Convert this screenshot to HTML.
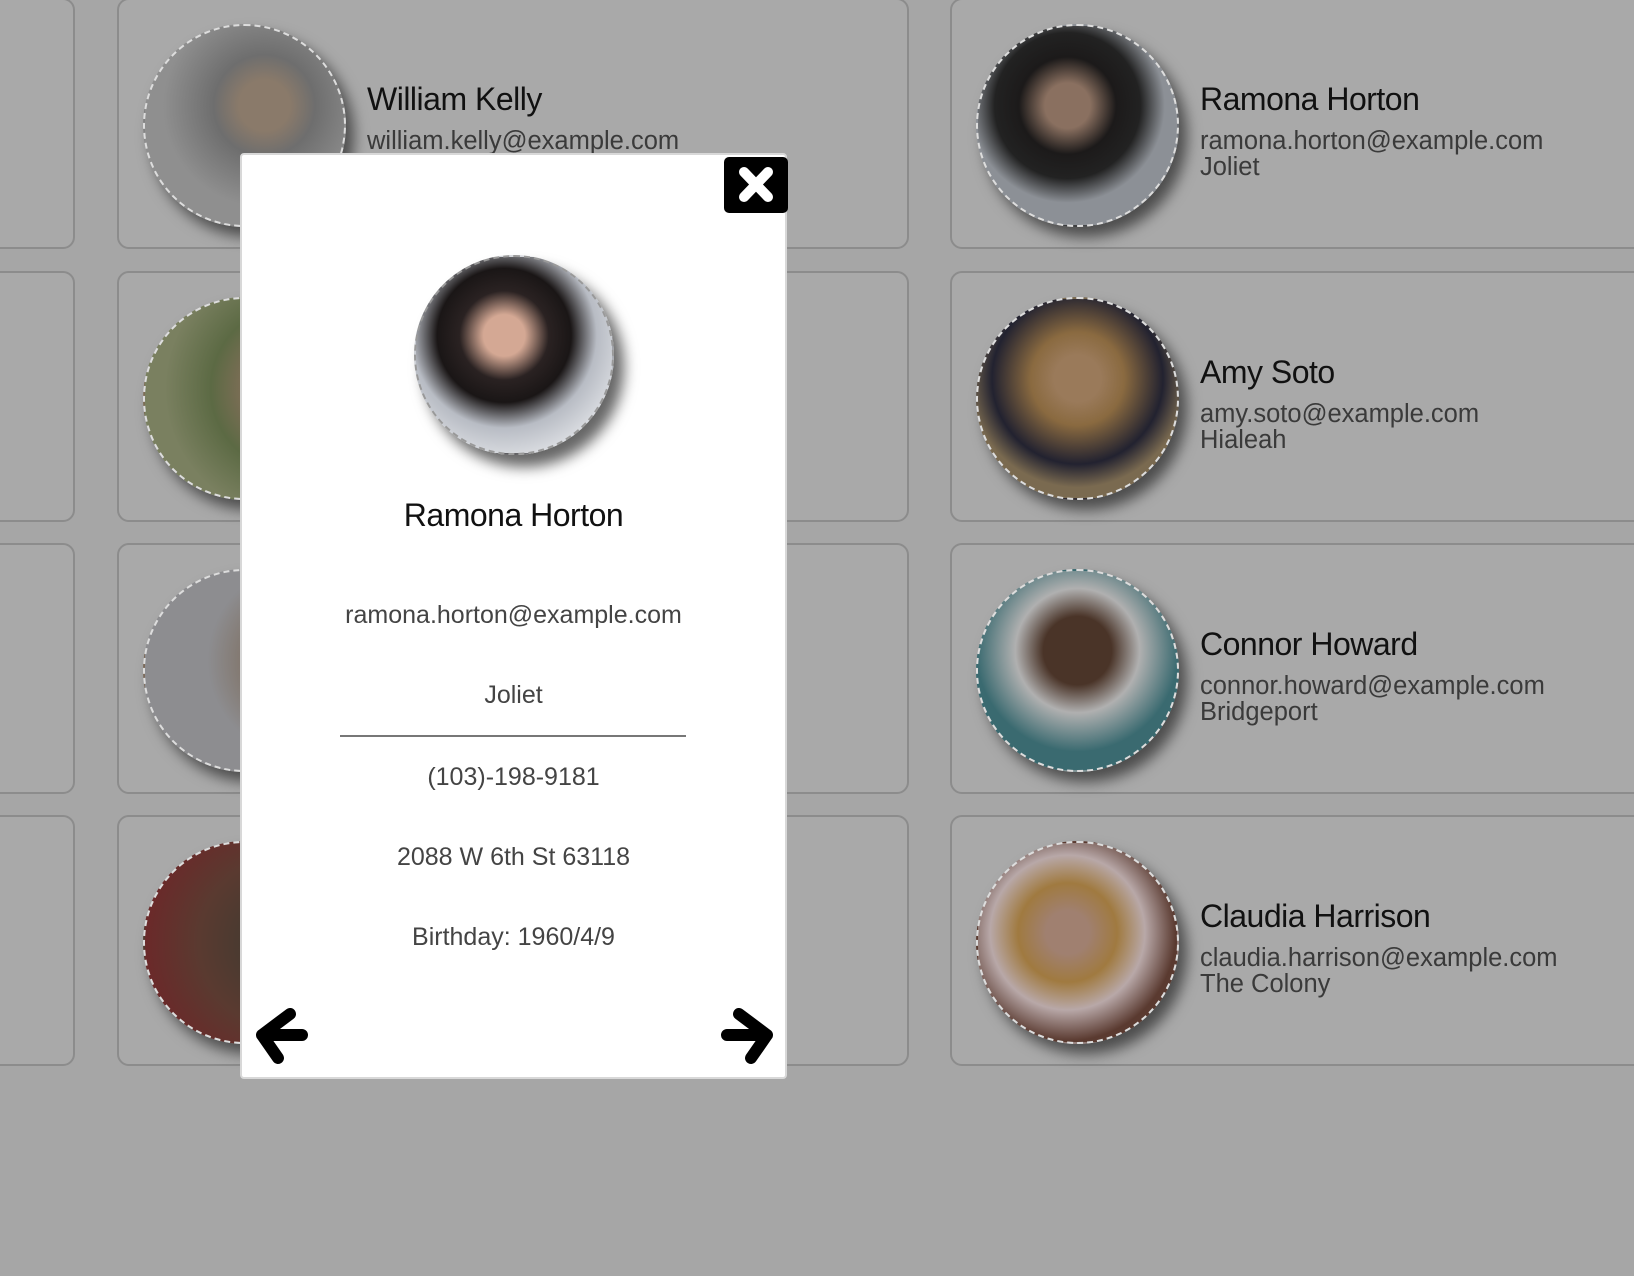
<!DOCTYPE html>
<html><head><meta charset="utf-8"><style>
*{margin:0;padding:0;box-sizing:border-box}
body{width:1634px;height:1276px;overflow:hidden;background:#a6a6a6;font-family:"Liberation Sans",sans-serif;position:relative}
.card{position:absolute;width:792px;height:251px;border:2px solid #8c8c8c;border-radius:12px;background:#a9a9a9}
.av{position:absolute;left:24px;top:24px;width:203px;height:203px;border-radius:50%;border:2px dashed #ddd;box-shadow:8px 10px 14px rgba(0,0,0,.55);overflow:hidden}
.card .nm{position:absolute;left:248px;top:81px;font-size:32px;color:#111;letter-spacing:-0.5px}
.card .em{position:absolute;left:248px;top:128px;font-size:25.5px;color:#3a3a3a;line-height:26px}
.modal{position:absolute;left:240px;top:153px;width:547px;height:926px;background:#fff;border:2px solid #d8d8d8;border-radius:4px}
.mt{position:absolute;left:0;width:100%;text-align:center;font-size:25px;color:#444}
</style></head><body>

<div class="card" style="left:-717px;top:-2px"></div>
<div class="card" style="left:-717px;top:271px"></div>
<div class="card" style="left:-717px;top:543px"></div>
<div class="card" style="left:-717px;top:815px"></div>

<div class="card" style="left:117px;top:-2px"><div class="av" style="background:radial-gradient(circle at 60% 40%,#8a7a6a 0 15%,#6e6e6e 30%,#8f8f8f 60%)"></div><div class="nm">William Kelly</div><div class="em">william.kelly@example.com</div></div>
<div class="card" style="left:117px;top:271px"><div class="av" style="background:radial-gradient(circle at 75% 45%,#8a6f5d 0 20%,#5c6a44 45%,#7a8060 70%)"></div></div>
<div class="card" style="left:117px;top:543px"><div class="av" style="background:radial-gradient(circle at 80% 45%,#7b6a5a 0 20%,#8d8d90 50%)"></div></div>
<div class="card" style="left:117px;top:815px"><div class="av" style="background:radial-gradient(circle at 70% 50%,#4a3a30 0 25%,#5a3a30 50%,#6a2a2a 80%)"></div></div>

<div class="card" style="left:950px;top:-2px"><div class="av" style="background:radial-gradient(circle at 45% 40%,#8a7060 0 14%,#1c1a1a 30%,#222 45%,#8c9096 60%)"></div><div class="nm">Ramona Horton</div><div class="em">ramona.horton@example.com<br>Joliet</div></div>
<div class="card" style="left:950px;top:271px"><div class="av" style="background:radial-gradient(circle at 50% 40%,#9a7a5a 0 15%,#8a6a40 30%,#222230 55%,#7a6a50 70%)"></div><div class="nm">Amy Soto</div><div class="em">amy.soto@example.com<br>Hialeah</div></div>
<div class="card" style="left:950px;top:543px"><div class="av" style="background:radial-gradient(circle at 50% 40%,#4a3428 0 22%,#b0b0b0 40%,#3a6a70 65%)"></div><div class="nm">Connor Howard</div><div class="em">connor.howard@example.com<br>Bridgeport</div></div>
<div class="card" style="left:950px;top:815px"><div class="av" style="background:radial-gradient(circle at 45% 45%,#a08070 0 14%,#a07a40 32%,#b8a8a8 50%,#5a3a30 70%)"></div><div class="nm">Claudia Harrison</div><div class="em">claudia.harrison@example.com<br>The Colony</div></div>

<div class="modal">
  <div style="position:absolute;left:482px;top:2px;width:64px;height:56px;background:#000;border-radius:5px">
    <svg width="64" height="56" viewBox="0 0 64 56"><path d="M20 15 L44 40 M44 15 L20 40" stroke="#fff" stroke-width="10" stroke-linecap="round"/></svg>
  </div>
  <div style="position:absolute;left:172px;top:100px;width:200px;height:200px;border-radius:50%;border:2px dashed #999;box-shadow:10px 12px 14px rgba(0,0,0,.6);overflow:hidden;background:radial-gradient(circle at 45% 40%,#d4a894 0 13%,#2a2222 28%,#1a1616 42%,#b8bcc4 58%,#e0e2e6 80%)"></div>
  <div class="mt" style="top:342px;font-size:32px;color:#111;letter-spacing:-0.5px">Ramona Horton</div>
  <div class="mt" style="top:446px">ramona.horton@example.com</div>
  <div class="mt" style="top:526px">Joliet</div>
  <div style="position:absolute;left:98px;top:580px;width:346px;height:2px;background:#777"></div>
  <div class="mt" style="top:608px">(103)-198-9181</div>
  <div class="mt" style="top:688px">2088 W 6th St 63118</div>
  <div class="mt" style="top:768px">Birthday: 1960/4/9</div>
  <svg style="position:absolute;left:12px;top:853px" width="56" height="58" viewBox="0 0 56 58"><path d="M36 6 L8 27 L24 50 M8 27 L48 27" fill="none" stroke="#000" stroke-width="12" stroke-linecap="round" stroke-linejoin="round"/></svg>
  <svg style="position:absolute;left:477px;top:853px" width="56" height="58" viewBox="0 0 56 58"><path d="M20 6 L48 27 L32 50 M48 27 L8 27" fill="none" stroke="#000" stroke-width="12" stroke-linecap="round" stroke-linejoin="round"/></svg>
</div>
</body></html>
